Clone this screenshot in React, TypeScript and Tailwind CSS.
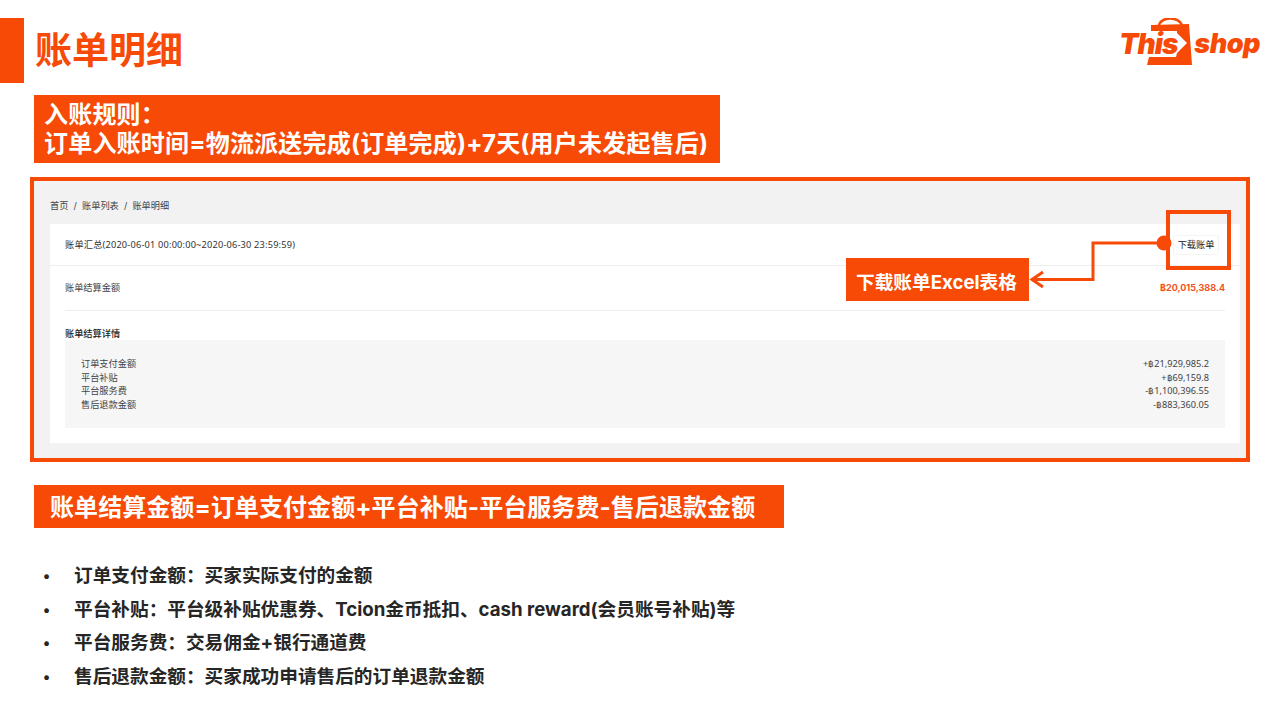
export default function App() {
  const cjk = "font-['Inter','Noto_Sans_CJK_SC',sans-serif]";
  const details: [string, string][] = [
    ["订单支付金额", "+฿21,929,985.2"],
    ["平台补贴", "+฿69,159.8"],
    ["平台服务费", "-฿1,100,396.55"],
    ["售后退款金额", "-฿883,360.05"],
  ];
  const bullets = [
    "订单支付金额：买家实际支付的金额",
    "平台补贴：平台级补贴优惠券、Tcion金币抵扣、cash reward(会员账号补贴)等",
    "平台服务费：交易佣金+银行通道费",
    "售后退款金额：买家成功申请售后的订单退款金额",
  ];
  return (
    <div className={`relative flex h-[720px] w-[1280px] flex-col overflow-hidden bg-white ${cjk}`}>
      <header className="flex h-[95px] items-start justify-between pt-[18px]">
        <div className="flex items-center">
          <div className="h-[65px] w-[24px] bg-[#f84a07]" />
          <h1 className="ml-[11px] text-[37px] font-bold leading-[65px] text-[#f84a07]">账单明细</h1>
        </div>
        <div className="mr-[20px] flex h-[47px] items-center text-[#f84a07]">
          <span className="w-[55px] pt-[4px] text-[28px] font-black italic leading-none tracking-[-1px]">This</span>
          <svg width="46" height="47" viewBox="0 0 46 47" className="-ml-[28px]">
            <path d="M13 8 C14 -2 34 -2 36 8" fill="none" stroke="#f84a07" strokeWidth="2.5" />
            <path d="M5 7 L43 6 L46 47 H1 L3 39 H30 L31 35 L41 25 L31 15 V13 H5 Z" fill="#f84a07" />
          </svg>
          <span className="ml-[2px] pt-[4px] text-[27px] font-black italic leading-none tracking-[-0.5px]">shop</span>
        </div>
      </header>

      <section className="ml-[34px] flex h-[68px] w-[686px] flex-col justify-center bg-[#f84a07] pl-[10px] text-[24px] font-bold leading-[29px] tracking-[0.2px] text-white">
        <div>入账规则：</div>
        <div>订单入账时间=物流派送完成(订单完成)+7天(用户未发起售后)</div>
      </section>

      <section className="ml-[30px] mt-[14px] h-[285px] w-[1220px] border-[4px] border-[#f84a07] bg-[#f2f2f3] pl-[16px] pr-[6px]">
        <div className="flex h-[43px] items-end pb-[11px] text-[9.2px] text-[#444444]">
          首页&nbsp;&nbsp;/&nbsp;&nbsp;账单列表&nbsp;&nbsp;/&nbsp;&nbsp;账单明细
        </div>
        <div className="h-[219px] bg-white">
          <div className="flex h-[42px] items-center justify-between border-b border-[#eeeeee] pl-[15px] pr-[21px] text-[9.2px] text-[#333333]">
            <span className="font-['Noto_Sans','Noto_Sans_CJK_SC',sans-serif] tracking-[0.2px]">账单汇总(2020-06-01 00:00:00~2020-06-30 23:59:59)</span>
            <span className="flex h-[20px] w-[46px] items-center justify-center rounded-[2px] border border-[#f4f4f4] text-[#222222]">下载账单</span>
          </div>
          <div className="mx-[15px] flex h-[45px] items-center justify-between border-b border-[#eeeeee] text-[9.2px] text-[#444444]">
            <span>账单结算金额</span>
            <span className="text-[9px] font-bold text-[#f0531c]">฿20,015,388.4</span>
          </div>
          <div className="mx-[15px] mt-[16px] text-[9.2px] font-medium leading-[14px] text-[#222222]">账单结算详情</div>
          <div className="mx-[15px] -mt-[1px] flex h-[88px] items-start justify-between bg-[#f6f6f7] px-[16px] pt-[17px] text-[9.2px] leading-[13.6px] text-[#444444]">
            <div>
              {details.map(([label]) => (
                <div key={label}>{label}</div>
              ))}
            </div>
            <div className="text-right font-['Noto_Sans','Noto_Sans_CJK_SC',sans-serif]">
              {details.map(([label, value]) => (
                <div key={label}>{value}</div>
              ))}
            </div>
          </div>
        </div>
      </section>

      <section className="ml-[34px] mt-[23px] flex h-[43px] w-[750px] items-center bg-[#f84a07] pl-[16px] pt-[2px] text-[24px] font-bold tracking-[0.07px] text-white">
        账单结算金额=订单支付金额+平台补贴-平台服务费-售后退款金额
      </section>

      <ul className="ml-[43px] mt-[31px] flex flex-col text-[18.67px] font-bold leading-[33.7px] text-[#262626]">
        {bullets.map((text) => (
          <li key={text} className="flex">
            <span className="w-[31px] text-[15px]">•</span>
            <span>{text}</span>
          </li>
        ))}
      </ul>

      <div className="absolute left-[1166px] top-[210px] h-[60px] w-[65px] border-[4px] border-[#f84a07]" />
      <div className="absolute left-[846px] top-[258px] flex h-[43px] w-[183px] items-center bg-[#f84a07] pl-[10px] pt-[7px] text-[18.67px] font-bold text-white">
        下载账单Excel表格
      </div>
      <svg className="absolute left-[1029px] top-[232px]" width="145" height="60" viewBox="0 0 145 60">
        <path d="M135 11 H64 V47.5 H4" fill="none" stroke="#f84a07" strokeWidth="3" />
        <path d="M14 40 L3 47.5 L14 55" fill="none" stroke="#f84a07" strokeWidth="3" />
        <circle cx="135" cy="11" r="7.5" fill="#f84a07" />
      </svg>
    </div>
  );
}
